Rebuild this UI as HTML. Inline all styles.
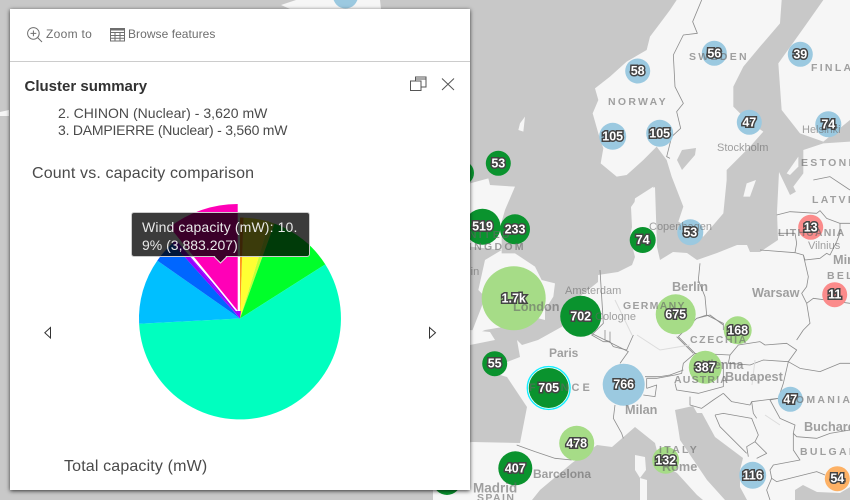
<!DOCTYPE html>
<html><head><meta charset="utf-8"><style>
html,body{margin:0;padding:0;width:850px;height:500px;overflow:hidden;background:#c8c8c8;font-family:"Liberation Sans",sans-serif}
#map{position:absolute;left:0;top:0}
#panel{position:absolute;left:10px;top:9px;width:460px;height:481px;background:#fff;box-shadow:0 1px 4px rgba(0,0,0,.75)}
.t{position:absolute;white-space:nowrap;line-height:1;color:#4a4a4a}
#tip{position:absolute;left:131px;top:212px;width:179px;height:45px;background:rgba(0,0,0,.77);border:1px solid #ccc;border-radius:3px;box-sizing:border-box}
.c text{font:bold 12.5px "Liberation Sans",sans-serif;fill:#fff;stroke:#444;stroke-width:3px;paint-order:stroke;text-anchor:middle;dominant-baseline:central}
.l text{font:11px "Liberation Sans",sans-serif;fill:#666;fill-opacity:.6;dominant-baseline:central}
.l .b{font-size:12.7px;font-weight:bold}
.l .u{font-weight:bold;font-size:10.5px;letter-spacing:2.3px}
</style></head><body>
<svg id="map" width="850" height="500" viewBox="0 0 850 500">
<rect width="850" height="500" fill="#c8c8c8"/>
<g fill="#f6f6f6">
<g transform="translate(470,0) scale(.33333)">
<path d="M620,0 L600,30 570,70 540,110 530,150 470,185 420,230 375,265 385,300 368,340 385,400 400,445 392,490 440,530 470,525 520,480 560,440 590,480 605,530 640,620 625,665 700,710 760,640 770,540 770,510 840,440 880,395 830,360 790,320 790,260 820,200 870,140 930,70 935,0Z"/>
<path d="M1060,0 L1000,85 925,190 935,330 990,400 1060,425 1140,360 V0Z"/>
<path d="M1000,450 L1060,430 1140,425 V620 L1000,620 970,560 1000,520Z"/>
<path d="M150,370 L165,350 160,395 145,390Z"/>
<path d="M495,595 L550,560 555,620 530,660 490,640Z"/>
<path d="M820,590 L830,550 858,540 840,590Z"/>
<path d="M950,520 L985,470 985,500 960,525Z"/>
</g>
<path d="M655,187 L638,197 631,207 632,227 630,237 635,257 632,265 618,272 598,275 598,282 588,290 575,300 565,325 538,340 522,345 517,340 520,357 507,362 490,372 507,377 527,407 520,443 472,442 450,445 433,470 433,500 532,500 540,490 572,463 597,445 612,447 635,427 655,443 660,463 677,473 697,495 703,500 850,500 V170 H816 L806,186 790,195 779,172 777,212 778,240 760,252 750,252 747,245 737,245 717,253 697,260 687,253 673,252 660,260 657,247 Z"/>
<g transform="translate(465,150) scale(.33333)">
<path d="M15,100 L70,85 75,105 150,110 120,180 110,215 110,310 150,310 210,350 230,390 270,400 265,440 240,480 240,510 200,500 120,530 60,540 15,560 50,470 60,440 40,420 60,330 110,300 15,290Z"/>
<path d="M55,372 L70,365 78,380 62,388Z"/>
</g>
<path d="M470,330 L490,332 495,340 470,345Z"/>
<path d="M281,5 L290,2 296,0 380,0 381,9 290,9Z"/>
<path d="M0,112 L9,110 9,116 0,116Z"/>
<path d="M635,455 L645,457 646,470 640,478 635,470Z"/>
<path d="M640,478 L647,480 647,500 640,500Z"/>
</g>
<g fill="#c8c8c8">
<path d="M675,410 L693,406 697,413 702,413 715,437 743,458 740,470 740,487 747,500 725,500 707,480 680,440 678,427Z"/>
<path d="M795,500 L795,490 803,485 817,492 840,493 850,487 850,500Z"/>
<path d="M677,160 L682,150 696,148 695,155 682,170Z"/>
</g>
<g fill="none" stroke="#8c8c8c" stroke-linejoin="round">
<g transform="translate(470,0) scale(.33333)" stroke-width="2.4">
<path d="M695,0 L668,65 682,100 640,105 610,165 615,260 640,310 620,335 632,385 605,410 590,470 600,475"/>
<path d="M1030,540 L1080,530 1140,570"/>
</g>
<g transform="translate(640,170) scale(.33333)" stroke-width="2.4">
<path d="M410,135 L450,125 530,130 540,122 560,145 600,160 630,160"/>
<path d="M415,190 L465,190 470,220 465,248 360,240"/>
<path d="M465,248 L490,255 495,270 540,265 560,250 570,255 590,215 600,190 600,160"/>
<path d="M490,255 L505,320 500,350 485,370 500,400 510,460 490,480 470,510"/>
<path d="M500,400 L520,385 630,400"/>
<path d="M180,280 L175,330 195,380 200,435 250,460 250,480"/>
<path d="M200,435 L170,445 115,500"/>
</g>
<g transform="translate(640,330) scale(.33333)" stroke-width="2.4">
<path d="M115,20 L165,70 270,75 265,100 330,105 370,90 445,95"/>
<path d="M270,75 L295,45 360,35 375,45 440,40 470,60 445,95 430,160 415,205 335,215 330,225 275,215 250,190"/>
<path d="M445,95 L480,115 540,125 600,100 630,100"/>
<path d="M415,205 L390,210 420,265 465,285 460,310 470,320 530,325 570,310 630,300"/>
<path d="M460,310 L460,360 480,390 400,405 390,420 395,445 410,455 470,440 530,425 555,435"/>
<path d="M105,160 L110,180 175,190 250,170 250,100 165,70 130,100 125,130 105,135 50,145 20,145"/>
<path d="M150,200 L150,225 185,235 220,210 250,190"/>
<path d="M225,255 L240,290 320,370 M225,255 L250,250 335,265 355,315 345,335 320,350 325,380"/>
<path d="M345,335 L380,370 350,385 M335,215 L340,250 350,265"/>
<path d="M20,175 L50,165 45,200 10,195 M20,145 L20,175"/>
<path d="M395,445 L380,480 390,510"/>
</g>
<g transform="translate(465,330) scale(.33333)" stroke-width="2.4">
<path d="M155,345 L210,365 270,385 320,390"/>
<path d="M380,10 L430,35 490,65 465,100 M450,225 L445,265 470,310 475,325"/>
<path d="M420,0 L420,30 435,35 435,5"/>
</g>
<g transform="translate(470,250) scale(.33333)" stroke-width="2.4">
<path d="M390,60 L400,220 365,255 400,275 420,275 430,290 470,300 490,255"/>
<path d="M620,260 L670,310 M680,205 L720,195 760,225"/>
<path d="M525,380 L570,380 600,375 640,360"/>
</g>
</g>
<g fill="none" stroke="#dcdcdc" stroke-width="1"><path d="M637,335 L660,350 690,345 M615,300 L632,335 M755,360 L752,385 M765,415 L780,425"/></g>
<g>
<g fill="#9bc9e0"><circle cx="345.5" cy="-4" r="12.5"/><circle cx="637.7" cy="71" r="12.5"/><circle cx="714.3" cy="53.3" r="12.5"/><circle cx="800.3" cy="54.3" r="12.5"/><circle cx="749.3" cy="122.3" r="12.5"/><circle cx="828.3" cy="124.3" r="13"/><circle cx="612.7" cy="136.3" r="13.5"/><circle cx="659.7" cy="133.3" r="13.5"/><circle cx="690.3" cy="232.3" r="13"/><circle cx="623.7" cy="384.7" r="21"/><circle cx="790.3" cy="399.3" r="12.5"/><circle cx="752.7" cy="475.3" r="13.5"/></g>
<g fill="#0a932e"><circle cx="498.3" cy="163.3" r="12.5"/><circle cx="462" cy="173" r="12"/><circle cx="482.5" cy="226.7" r="18"/><circle cx="515" cy="229.3" r="15"/><circle cx="642.7" cy="240" r="13"/><circle cx="580.7" cy="316.3" r="20.5"/><circle cx="494.7" cy="363.7" r="12.5"/><circle cx="515.3" cy="468.3" r="17"/><circle cx="447" cy="481" r="14"/></g>
<circle cx="548.7" cy="388" r="21.4" fill="#fff" stroke="#1ef" stroke-width="1.4"/><circle cx="548.7" cy="388" r="20" fill="#0a932e"/>
<g fill="#a6dc87"><circle cx="513.7" cy="298.3" r="32"/><circle cx="675.7" cy="314.3" r="20"/><circle cx="737.7" cy="330.3" r="14"/><circle cx="705.3" cy="367.3" r="16.5"/><circle cx="576.7" cy="443.3" r="17.5"/><circle cx="665.7" cy="460.3" r="13.5"/></g>
<g fill="#fb8b8b"><circle cx="810.7" cy="227.3" r="12.5"/><circle cx="834.7" cy="294.7" r="12.5"/></g>
<circle cx="837.3" cy="478.7" r="12.5" fill="#fdb165"/>
</g>
<g class="l">
<text x="608" y="102" class="u">NORWAY</text><text x="689" y="57" class="u">SWEDEN</text><text x="811" y="68" class="u">FINLAND</text>
<text x="717" y="148">Stockholm</text><text x="802" y="130">Helsinki</text><text x="801" y="163" class="u">ESTONIA</text><text x="812" y="200" class="u">LATVIA</text>
<text x="778" y="233" class="u" style="letter-spacing:1.2px">LITHUANIA</text><text x="808" y="246">Vilnius</text><text x="649" y="227">Copenhagen</text>
<text x="459" y="235" class="u">UNITED</text><text x="459" y="247" class="u">KINGDOM</text><text x="448" y="272">Dublin</text>
<text x="513" y="307" class="b">London</text><text x="565" y="291">Amsterdam</text><text x="623" y="306" class="u" style="letter-spacing:1.3px">GERMANY</text>
<text x="672" y="287" class="b">Berlin</text><text x="595" y="317">Cologne</text><text x="752" y="293" class="b">Warsaw</text><text x="833" y="260" class="b">Minsk</text><text x="827" y="276" class="u">BELARUS</text>
<text x="549" y="353" class="b" style="font-size:12px">Paris</text><text x="529" y="388" class="u" style="font-size:11px;letter-spacing:3px">FRANCE</text><text x="690" y="340" class="u" style="letter-spacing:1.6px">CZECHIA</text>
<text x="702" y="365" class="b">Vienna</text><text x="674" y="380" class="u" style="letter-spacing:1.2px">AUSTRIA</text><text x="725" y="377" class="b">Budapest</text>
<text x="625" y="410" class="b">Milan</text><text x="786" y="400" class="u">ROMANIA</text><text x="804" y="427" class="b">Bucharest</text><text x="800" y="452" class="u">BULGARIA</text>
<text x="659" y="450" class="u">ITALY</text><text x="662" y="467" class="b">Rome</text><text x="533" y="474" class="b" style="font-size:12px">Barcelona</text>
<text x="473" y="488" class="b" style="font-size:13.5px">Madrid</text><text x="477" y="498" class="u" style="letter-spacing:1.4px">SPAIN</text>
</g>
<g class="c">
<text x="637.7" y="71">58</text><text x="714.3" y="53.3">56</text><text x="800.3" y="54.3">39</text><text x="749.3" y="122.3">47</text><text x="828.3" y="124.3">74</text><text x="612.7" y="136.3">105</text><text x="659.7" y="133.3">105</text><text x="498.3" y="163.3">53</text><text x="482.5" y="226.7">519</text><text x="515" y="229.3">233</text><text x="642.7" y="240">74</text><text x="690.3" y="232.3">53</text><text x="810.7" y="227.3">13</text><text x="513.7" y="298.3">1.7k</text><text x="580.7" y="316.3">702</text><text x="675.7" y="314.3">675</text><text x="737.7" y="330.3">168</text><text x="834.7" y="294.7">11</text><text x="494.7" y="363.7">55</text><text x="548.7" y="388">705</text><text x="623.7" y="384.7">766</text><text x="705.3" y="367.3">387</text><text x="790.3" y="399.3">47</text><text x="576.7" y="443.3">478</text><text x="665.7" y="460.3">132</text><text x="515.3" y="468.3">407</text><text x="752.7" y="475.3">116</text><text x="837.3" y="478.7">54</text>
</g>
</svg>
<div id="panel"></div>
<svg style="position:absolute;left:0;top:0" width="850" height="500" viewBox="0 0 850 500">
<line x1="10" y1="61.5" x2="470" y2="61.5" stroke="#ccc"/>
<g fill="none" stroke="#6e6e6e" stroke-width="1">
<circle cx="33.4" cy="33.4" r="5.8"/><path d="M37.5,37.5 L42,42 M33.4,30.5 V36.3 M30.5,33.4 H36.3"/>
<path d="M110.5,28.5 H124.5 V41 H110.5 Z M110.5,32.5 H124.5 M110.5,35.5 H124.5 M110.5,38.3 H124.5 M115,32.5 V41 M120,32.5 V41"/><path d="M110.5,29.5 H124.5" stroke-width="2"/>
</g>
<g fill="none" stroke="#555" stroke-width="1">
<path d="M415.5,81 V77 H426 V87 H421"/><rect x="410.5" y="81" width="10.5" height="9.5"/><path d="M415.5,79 H426"/>
<path d="M442,78.5 L454,90 M454,78.5 L442,90"/>
<path d="M50.5,327.5 L44.8,332.8 L50.5,338 Z M429.5,327.5 L435.5,332.8 L429.5,338 Z" stroke="#333"/>
</g>
<path d="M240,318.5 L243.5,217.6 A101,101 0 0 1 269.5,221.9Z" fill="#ffff33"/>
<path d="M240,318.5 L240,217.5 A101,101 0 0 1 243.5,217.6Z" fill="#ff9a1a"/>
<path d="M240,318.5 L269.5,221.9 A101,101 0 0 1 274.5,223.6Z" fill="#c6ff33"/>
<path d="M240,318.5 L274.5,223.6 A101,101 0 0 1 325.3,264.4Z" fill="#00ff2a"/>
<path d="M240,318.5 L325.3,264.4 A101,101 0 1 1 139.1,323.8Z" fill="#00ffbf"/>
<path d="M240,318.5 L139.1,323.8 A101,101 0 0 1 157.3,260.6Z" fill="#00bfff"/>
<path d="M240,318.5 L157.3,260.6 A101,101 0 0 1 172.4,243.4Z" fill="#0066ff"/>
<path d="M240,318.5 L172.4,243.4 A101,101 0 0 1 176.2,240.2Z" fill="#9900ff"/>
<path d="M240,318.5 L176.2,240.2 L238,312Z" fill="#9900ff"/>
<path d="M238,313 L169,227.5 A112,112 0 0 1 238,204 Z" fill="#ff00b7"/>
<path d="M169,227.5 L238.5,313 V204" fill="none" stroke="#fff" stroke-width="1.6"/>
<path d="M236,311 L240,318.5 L241,311Z" fill="#a0f"/>
</svg>
<div class="t" style="left:46px;top:28px;font-size:12px;color:#6e6e6e;letter-spacing:.3px">Zoom to</div>
<div class="t" style="left:128px;top:28px;font-size:12px;color:#6e6e6e;letter-spacing:.05px">Browse features</div>
<div class="t" style="left:24.5px;top:79px;font-size:15px;font-weight:bold;color:#323232">Cluster summary</div>
<div class="t" style="left:58px;top:106px;font-size:14px;letter-spacing:.03px">2. CHINON (Nuclear) - 3,620 mW</div>
<div class="t" style="left:58px;top:123px;font-size:14px;letter-spacing:-.22px">3. DAMPIERRE (Nuclear) - 3,560 mW</div>
<div class="t" style="left:32px;top:166px;font-size:16px;letter-spacing:.15px">Count vs. capacity comparison</div>
<div class="t" style="left:64px;top:459px;font-size:16px;letter-spacing:.15px">Total capacity (mW)</div>
<div id="tip"></div>
<svg style="position:absolute;left:213px;top:255px" width="16" height="10"><path d="M1,1.5 L7.5,8 L14,1.5" fill="rgba(0,0,0,.77)" stroke="#ddd" stroke-width="1"/><path d="M1,0 H14 L7.5,7Z" fill="#3a0029"/></svg>
<div class="t" style="left:142px;top:220px;font-size:14px;color:#e8e8e8;letter-spacing:.13px">Wind capacity (mW): 10.</div>
<div class="t" style="left:142px;top:238px;font-size:14px;color:#e8e8e8">9% (3,883.207)</div>
</body></html>
